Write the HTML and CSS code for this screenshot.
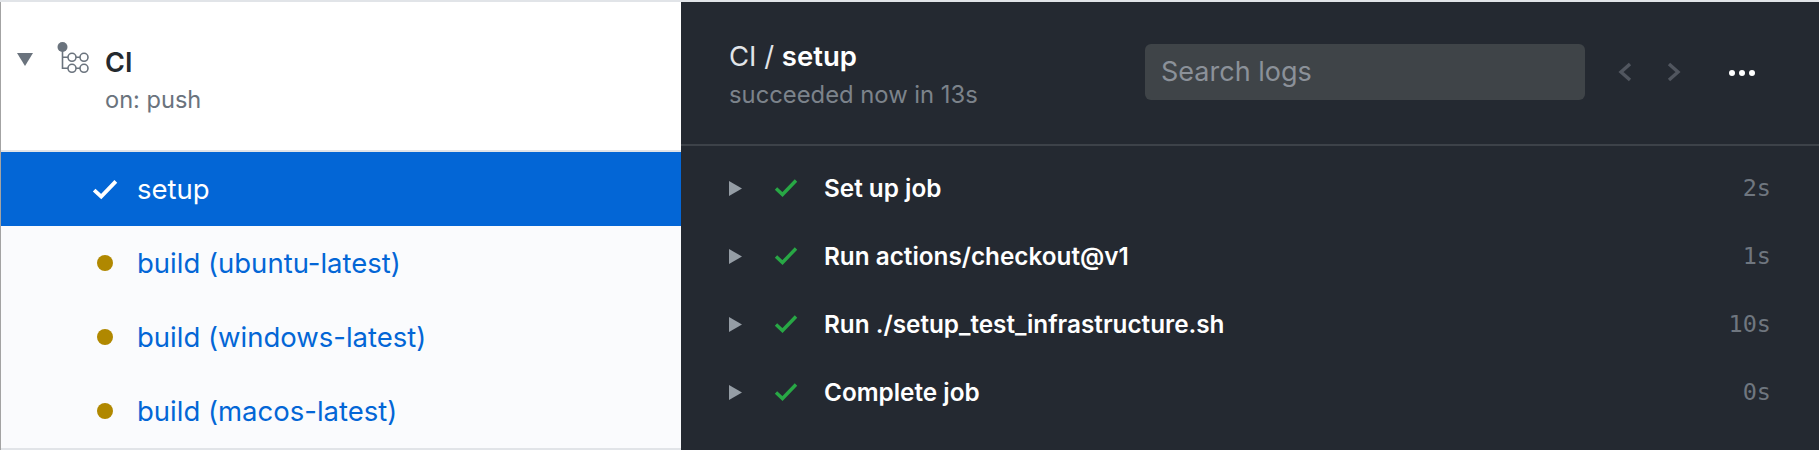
FILE: index.html
```html
<!DOCTYPE html>
<html lang="en">
<head>
<meta charset="utf-8">
<title>CI / setup</title>
<link rel="stylesheet" href="styles.css">
</head>
<body>
<div class="page">
  <aside class="sidebar">
    <header class="workflow">
      <svg class="caret" viewBox="0 0 16 13"><path d="M0 0H16L8 13Z"/></svg>
      <svg class="wf-icon" viewBox="0 0 34 34">
        <circle cx="5.5" cy="5" r="5"/>
        <path class="wf-line" d="M5.5 6V26.3H11M5.5 15.3H11M19 15.3H23M19 26.3H23"/>
        <circle class="wf-ring" cx="15" cy="15.3" r="4"/>
        <circle class="wf-ring" cx="27" cy="15.3" r="4"/>
        <circle class="wf-ring" cx="15" cy="26.3" r="4"/>
        <circle class="wf-ring" cx="27" cy="26.3" r="4"/>
      </svg>
      <div class="wf-text">
        <div class="wf-name">CI</div>
        <div class="wf-trigger">on: push</div>
      </div>
    </header>
    <nav class="jobs">
      <a class="job selected">
        <span class="job-icon"><svg class="check-white" viewBox="0 0 24 20"><path d="M2 11L8.5 17L22 3"/></svg></span>
        <span>setup</span>
      </a>
      <a class="job"><span class="job-icon"><span class="dot"></span></span><span>build (ubuntu-latest)</span></a>
      <a class="job"><span class="job-icon"><span class="dot"></span></span><span>build (windows-latest)</span></a>
      <a class="job"><span class="job-icon"><span class="dot"></span></span><span>build (macos-latest)</span></a>
    </nav>
  </aside>
  <main class="log">
    <header class="log-head">
      <div class="log-title">
        <div class="title">CI / <strong>setup</strong></div>
        <div class="subtitle">succeeded now in 13s</div>
      </div>
      <div class="search">Search logs</div>
      <svg class="chev chev-left" viewBox="0 0 14 20"><path d="M12 2L3 10L12 18"/></svg>
      <svg class="chev chev-right" viewBox="0 0 14 20"><path d="M2 2L11 10L2 18"/></svg>
      <div class="more"><i></i><i></i><i></i></div>
    </header>
    <section class="steps">
      <div class="step">
        <svg class="play" viewBox="0 0 13 15"><path d="M0 0L13 7.5L0 15Z"/></svg>
        <svg class="check" viewBox="0 0 24 20"><path d="M2 10.5L8.5 16.5L22 2.5"/></svg>
        <span class="step-name">Set up job</span><span class="time">2s</span>
      </div>
      <div class="step">
        <svg class="play" viewBox="0 0 13 15"><path d="M0 0L13 7.5L0 15Z"/></svg>
        <svg class="check" viewBox="0 0 24 20"><path d="M2 10.5L8.5 16.5L22 2.5"/></svg>
        <span class="step-name">Run actions/checkout@v1</span><span class="time">1s</span>
      </div>
      <div class="step">
        <svg class="play" viewBox="0 0 13 15"><path d="M0 0L13 7.5L0 15Z"/></svg>
        <svg class="check" viewBox="0 0 24 20"><path d="M2 10.5L8.5 16.5L22 2.5"/></svg>
        <span class="step-name">Run ./setup_test_infrastructure.sh</span><span class="time">10s</span>
      </div>
      <div class="step">
        <svg class="play" viewBox="0 0 13 15"><path d="M0 0L13 7.5L0 15Z"/></svg>
        <svg class="check" viewBox="0 0 24 20"><path d="M2 10.5L8.5 16.5L22 2.5"/></svg>
        <span class="step-name">Complete job</span><span class="time">0s</span>
      </div>
    </section>
  </main>
</div>
</body>
</html>
```
FILE: styles.css
```css
* { box-sizing: border-box; }
html, body { margin: 0; height: 450px; overflow: hidden; background: #fff; }
body { font-family: Inter, "Liberation Sans", sans-serif; }

.page {
  display: flex;
  height: 450px;
  border-top: 2px solid #e1e4e8;
}

.sidebar {
  width: 681px;
  flex: none;
  height: 448px;
  border-left: 1px solid #a3a3a3;
  display: flex;
  flex-direction: column;
}

.workflow {
  height: 150px;
  flex: none;
  display: flex;
  align-items: flex-start;
  border-bottom: 2px solid #e1e4e8;
  background: #fff;
  padding: 40px 0 0 16px;
}
.caret { width: 16px; height: 13px; fill: #6a737d; margin-top: 11px; flex: none; }
.wf-icon { width: 34px; height: 34px; margin: 0 0 0 24px; flex: none; overflow: visible; }
.wf-icon circle { fill: #6a737d; }
.wf-icon .wf-ring { fill: none; stroke: #6a737d; stroke-width: 1.6; }
.wf-line { fill: none; stroke: #6a737d; stroke-width: 1.6; }
.wf-text { margin-left: 14px; }
.wf-name { font-size: 27px; line-height: 32px; font-weight: 600; color: #24292e; margin-top: 5px; }
.wf-trigger { font-size: 23.6px; line-height: 28px; color: #6a737d; margin-top: 7px; }

.jobs { flex: 1; background: #fafbfd; display: flex; flex-direction: column; border-bottom: 2px solid #e1e4e8; }
.job {
  height: 74px;
  flex: none;
  display: flex;
  align-items: center;
  color: #0366d6;
  font-size: 27.5px;
  padding-left: 91px;
}
.job.selected { background: #0366d6; color: #fff; }
.job-icon { width: 45px; display: flex; align-items: center; flex: none; }
.dot { width: 16px; height: 16px; border-radius: 50%; background: #b08800; margin-left: 5px; }
.check-white { width: 26px; height: 22px; fill: none; stroke: #fff; stroke-width: 3.6; }

.log { flex: 1; background: #242931; color: #fff; height: 448px; }
.log-head {
  height: 144px;
  border-bottom: 2px solid #3d4249;
  display: flex;
  align-items: flex-start;
  padding: 0 0 0 48px;
}
.log-title { width: 416px; flex: none; padding-top: 38px; }
.title { font-size: 27.5px; line-height: 32px; color: #e1e4e8; }
.title strong { font-weight: 600; color: #fff; }
.subtitle { font-size: 23.8px; line-height: 28px; color: #7c838b; margin-top: 9px; }
.search {
  width: 440px;
  height: 56px;
  margin-top: 42px;
  background: #3f4448;
  border-radius: 6px;
  color: #8b9199;
  font-size: 27px;
  line-height: 56px;
  padding-left: 16px;
  flex: none;
}
.chev { width: 14px; height: 20px; fill: none; stroke: #51565f; stroke-width: 3.4; margin-top: 60px; flex: none; }
.chev-left { margin-left: 33px; }
.chev-right { margin-left: 35px; }
.more { display: flex; gap: 4px; margin: 68px 0 0 48px; }
.more i { width: 6px; height: 6px; border-radius: 50%; background: #fff; display: block; }

.steps { padding-top: 8px; }
.step {
  height: 68px;
  display: flex;
  align-items: center;
  padding: 0 48px 0 48px;
}
.play { width: 13px; height: 15px; fill: #959da5; flex: none; }
.check { width: 24px; height: 20px; fill: none; stroke: #28a745; stroke-width: 3.4; margin-left: 32px; flex: none; }
.step-name { margin-left: 26px; font-size: 24.3px; font-weight: 600; color: #fff; flex: 1; }
.time { font-family: "DejaVu Sans Mono", monospace; font-size: 23.5px; color: #6f767f; }
```
